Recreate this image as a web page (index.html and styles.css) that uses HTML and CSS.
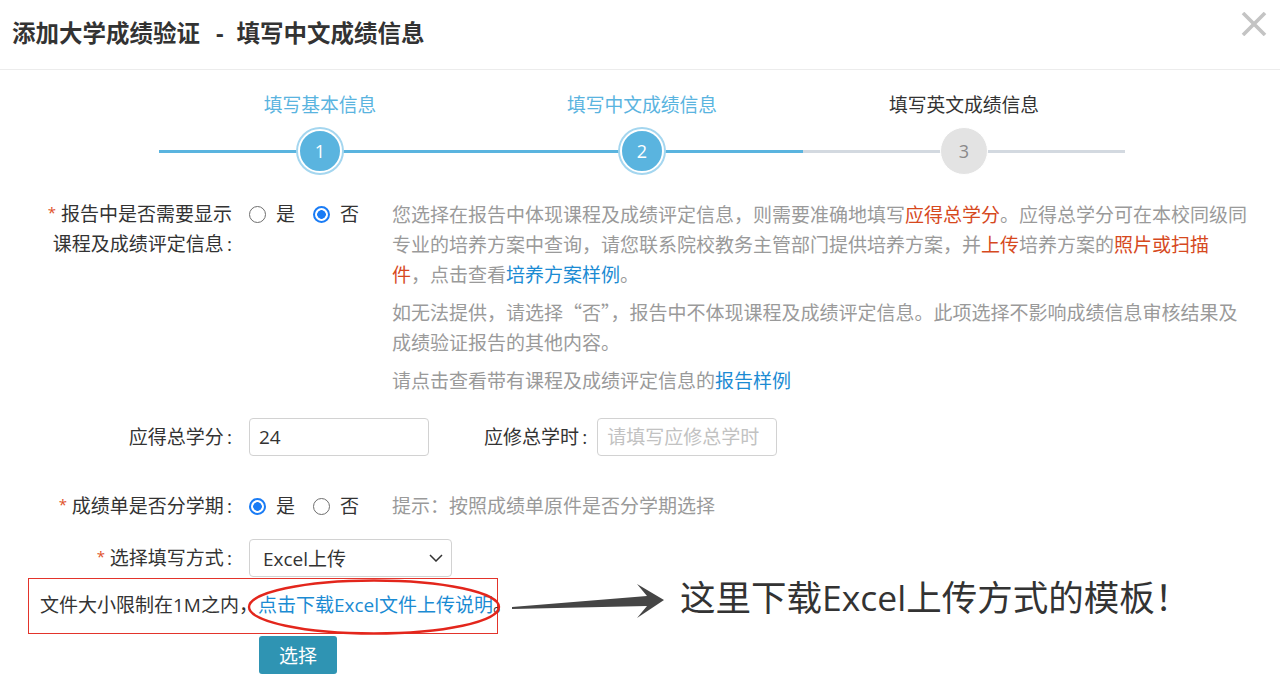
FILE: index.html
```html
<!DOCTYPE html>
<html lang="zh-CN">
    <head>
        <meta charset="UTF-8">
        <meta name="viewport" content="width=device-width, initial-scale=1.0">
        <title>添加大学成绩验证</title>
        <link rel="stylesheet" href="styles.css">
    </head>
    <body>
        <header class="modal-header">
            <h1 class="modal-title">添加大学成绩验证<span class="sep">-</span>填写中文成绩信息</h1>
            <button class="close-btn" aria-label="关闭">
                <svg width="26" height="24" viewBox="0 0 26 24">
                    <path d="M2 1 L24 23 M24 1 L2 23" stroke="#c4c4c4" stroke-width="3.6" fill="none"/>
                </svg>
            </button>
        </header>

        <div class="steps">
            <div class="step done">
                <div class="step-label">填写基本信息</div>
                <div class="step-track"><span class="step-num">1</span></div>
            </div>
            <div class="step done">
                <div class="step-label">填写中文成绩信息</div>
                <div class="step-track"><span class="step-num">2</span></div>
            </div>
            <div class="step">
                <div class="step-label">填写英文成绩信息</div>
                <div class="step-track"><span class="step-num">3</span></div>
            </div>
        </div>

        <form class="form">
            <div class="form-row row-show">
                <label class="form-label"><span class="req">*</span> 报告中是否需要显示<br>课程及成绩评定信息&thinsp;:</label>
                <div class="form-ctrl">
                    <div class="radios">
                        <label class="radio"><input type="radio" name="show"> 是</label>
                        <label class="radio"><input type="radio" name="show" checked> 否</label>
                    </div>
                    <div class="desc">
                        <p>您选择在报告中体现课程及成绩评定信息，则需要准确地填写<span class="hl">应得总学分</span>。应得总学分可在本校同级同专业的培养方案中查询，请您联系院校教务主管部门提供培养方案，并<span class="hl">上传</span>培养方案的<span class="hl">照片或扫描</span><br><span class="hl">件</span>，点击查看<a href="#" class="link">培养方案样例</a>。</p>
                        <p>如无法提供，请选择“否”，报告中不体现课程及成绩评定信息。此项选择不影响成绩信息审核结果及成绩验证报告的其他内容。</p>
                        <p>请点击查看带有课程及成绩评定信息的<a href="#" class="link">报告样例</a></p>
                    </div>
                </div>
            </div>

            <div class="form-row row-credit">
                <label class="form-label">应得总学分&thinsp;:</label>
                <div class="form-ctrl">
                    <input class="text-input" type="text" value="24">
                    <label class="form-label inline">应修总学时&thinsp;:</label>
                    <input class="text-input" type="text" placeholder="请填写应修总学时">
                </div>
            </div>

            <div class="form-row row-term">
                <label class="form-label"><span class="req">*</span> 成绩单是否分学期&thinsp;:</label>
                <div class="form-ctrl">
                    <div class="radios">
                        <label class="radio"><input type="radio" name="term" checked> 是</label>
                        <label class="radio"><input type="radio" name="term"> 否</label>
                    </div>
                    <span class="hint">提示：按照成绩单原件是否分学期选择</span>
                </div>
            </div>

            <div class="form-row row-mode">
                <label class="form-label"><span class="req">*</span> 选择填写方式&thinsp;:</label>
                <div class="form-ctrl">
                    <div class="select">
                        <span>Excel上传</span>
                        <svg width="14" height="8" viewBox="0 0 14 8"><path d="M1 1 L7 7 L13 1" stroke="#333" stroke-width="1.5" fill="none"/></svg>
                    </div>
                </div>
            </div>

            <div class="note-row">
                <div class="note-box">文件大小限制在1M之内，<a href="#" class="link">点击下载Excel文件上传说明</a>。</div>
                <svg class="ring" width="260" height="60" viewBox="0 0 260 60">
                    <ellipse cx="128" cy="29" rx="125" ry="26.5" stroke="#e3261c" stroke-width="2.4" fill="none"/>
                </svg>
                <svg class="arrow" width="160" height="56" viewBox="0 0 160 56">
                    <path d="M4 29 L139 18 L129 6 L156 22 L129 40 L139 28 L4 31 Z" fill="#454545"/>
                </svg>
                <div class="note-text">这里下载Excel上传方式的模板！</div>
            </div>

            <button type="button" class="btn-choose">选择</button>
        </form>
    </body>
</html>
```

FILE: styles.css
```css
body {
    margin: 0;
    font-family: "Open Sans", "Noto Sans CJK SC", sans-serif;
    color: #333;
    background: #fff;
}

.modal-header {
    height: 69px;
    border-bottom: 1px solid #ececec;
    display: flex;
    align-items: center;
    justify-content: space-between;
    padding: 0 12px;
}

.modal-title {
    margin: 0;
    font-size: 23.5px;
    font-weight: bold;
    color: #333;
    line-height: 30px;
    position: relative;
    top: -2px;
}

.sep {
    margin: 0 13px 0 16px;
}

.close-btn {
    border: none;
    background: none;
    padding: 0;
    margin-right: 1px;
    position: relative;
    top: -9px;
    cursor: pointer;
}

.steps {
    display: flex;
    width: 966px;
    margin: 23px 0 0 159px;
}

.step {
    flex: 1;
    text-align: center;
}

.step-label {
    font-size: 18.8px;
    line-height: 24px;
    height: 24px;
    color: #333;
    margin-bottom: 10px;
}

.step.done .step-label {
    color: #5ab4df;
}

.step-track {
    position: relative;
    height: 48px;
    display: flex;
    justify-content: center;
    align-items: center;
}

.step-track::before {
    content: "";
    position: absolute;
    left: 0;
    right: 0;
    top: 23px;
    height: 3px;
    background: #d3d9e0;
}

.step.done .step-track::before {
    background: #5ab4df;
}

.step-num {
    position: relative;
    width: 46px;
    height: 46px;
    border-radius: 50%;
    background: #e3e3e3;
    color: #8a8a8a;
    font-size: 18px;
    line-height: 46px;
    border: 1px solid #fff;
}

.step.done .step-num {
    width: 40px;
    height: 40px;
    line-height: 40px;
    border-width: 2px;
    background: #5ab4df;
    color: #fff;
    box-shadow: 0 0 0 2px #a4d6ef;
}

.form {
    margin-top: 24px;
    font-size: 19px;
}

.form-row {
    display: grid;
    grid-template-columns: 232px 1fr;
    column-gap: 17px;
}

.form-label {
    text-align: right;
    line-height: 30px;
    color: #333;
}

.req {
    color: #e0502a;
    font-size: 15px;
    line-height: 1;
    position: relative;
    top: -3px;
}

.form-ctrl {
    display: flex;
    align-items: flex-start;
}

.radios {
    display: flex;
    gap: 18px;
    line-height: 30px;
    height: 30px;
    margin-right: 33px;
}

.radio {
    display: flex;
    align-items: center;
    gap: 10px;
    color: #333;
}

.radio input {
    appearance: none;
    margin: 0;
    width: 17px;
    height: 17px;
    border: 1px solid #6e6e6e;
    border-radius: 50%;
    background: #fff;
}

.radio input:checked {
    border: 2px solid #1a7cf5;
    background: radial-gradient(circle, #1a7cf5 0 4px, #fff 4.6px);
}

.desc {
    width: 860px;
    font-family: "Noto Sans CJK SC", sans-serif;
    color: #9a9a9a;
    line-height: 30px;
}

.desc p {
    margin: 0 0 8px;
}

.hl {
    color: #d6491e;
}

.link {
    color: #1b8bd3;
    text-decoration: none;
}

.row-show {
    height: 196px;
}

.row-credit {
    margin-top: 23px;
    height: 38px;
}

.row-credit .form-label,
.row-credit .form-ctrl {
    align-self: center;
}

.row-credit .form-ctrl {
    align-items: center;
}

.form-label.inline {
    margin: 0 10px 0 55px;
}

.text-input {
    width: 180px;
    height: 38px;
    box-sizing: border-box;
    border: 1px solid #d2d2d2;
    border-radius: 4px;
    padding: 0 9px;
    font: inherit;
    font-size: 19px;
    color: #333;
}

.text-input::placeholder {
    color: #c2c2c2;
}

.row-term {
    margin-top: 35px;
    height: 30px;
}

.hint {
    color: #9a9a9a;
    line-height: 30px;
}

.row-mode {
    margin-top: 18px;
    height: 38px;
    align-items: center;
}

.select {
    width: 203px;
    height: 38px;
    box-sizing: border-box;
    border: 1px solid #d2d2d2;
    border-radius: 4px;
    padding: 0 8px 0 13px;
    display: flex;
    align-items: center;
    justify-content: space-between;
    color: #333;
}

.note-row {
    position: relative;
    display: flex;
    align-items: flex-start;
    height: 56px;
    margin: 1px 0 0 28px;
}

.note-box {
    width: 470px;
    height: 56px;
    box-sizing: border-box;
    border: 1.5px solid #e3342b;
    padding-left: 11px;
    line-height: 53px;
    color: #333;
    white-space: nowrap;
}

.ring {
    position: absolute;
    left: 218px;
    top: 0;
}

.arrow {
    margin-left: 10px;
}

.note-text {
    margin-left: 12px;
    font-size: 35.5px;
    line-height: 38px;
    color: #333;
}

.btn-choose {
    display: block;
    margin: 2px 0 0 259px;
    width: 78px;
    height: 38px;
    border: none;
    border-radius: 3px;
    background: #2f94b3;
    color: #fff;
    font: inherit;
    font-size: 19px;
}
```
